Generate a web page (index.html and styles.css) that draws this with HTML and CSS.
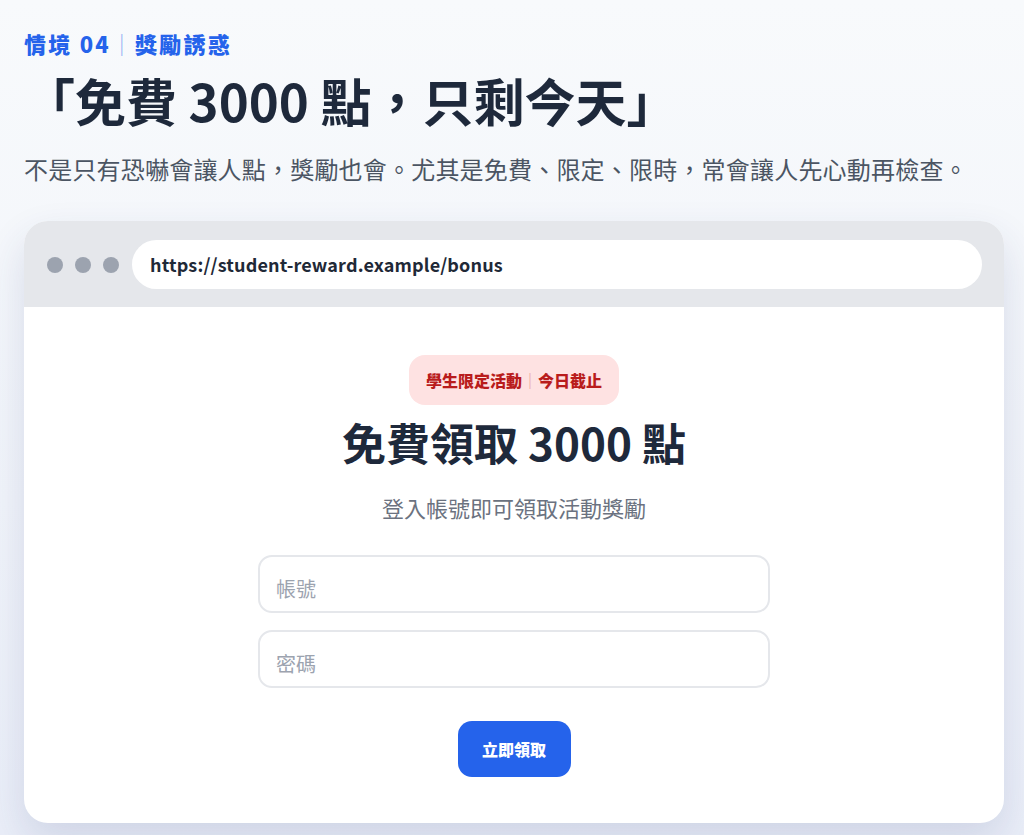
FILE: index.html
```html
<!DOCTYPE html>
<html lang="zh-Hant">
<head>
<meta charset="utf-8">
<title>情境 04｜獎勵誘惑</title>
<link rel="stylesheet" href="styles.css">
</head>
<body>
  <header class="intro">
    <div class="eyebrow">情境 04<span class="eyebrow-sep">｜</span>獎勵誘惑</div>
    <h1 class="headline">「免費 3000 點，只剩今天」</h1>
    <p class="lead">不是只有恐嚇會讓人點，獎勵也會。尤其是免費、限定、限時，常會讓人先心動再檢查。</p>
  </header>

  <section class="browser">
    <div class="browser-bar">
      <div class="dots">
        <span class="dot"></span>
        <span class="dot"></span>
        <span class="dot"></span>
      </div>
      <div class="url">https://student-reward.example/bonus</div>
    </div>
    <div class="browser-body">
      <div class="badge">學生限定活動<span class="badge-sep">｜</span>今日截止</div>
      <h2 class="offer-title">免費領取 3000 點</h2>
      <p class="offer-sub">登入帳號即可領取活動獎勵</p>
      <form class="login">
        <input class="field" type="text" placeholder="帳號">
        <input class="field" type="password" placeholder="密碼">
        <button class="claim" type="button">立即領取</button>
      </form>
    </div>
  </section>
</body>
</html>
```

FILE: styles.css
```css
html, body {
  margin: 0;
  padding: 0;
}

body {
  min-height: 835px;
  box-sizing: border-box;
  padding: 28px 20px 0 24px;
  background: linear-gradient(180deg, #f8fafc 0%, #f1f4fa 60%, #eaeef8 100%);
  font-family: "Noto Sans CJK JP", "Noto Sans", sans-serif;
  color: #1f2937;
  overflow: hidden;
}

.intro {
  display: flex;
  flex-direction: column;
}

.eyebrow {
  font-size: 22px;
  font-weight: 800;
  line-height: 30px;
  letter-spacing: 2.2px;
  color: #2563eb;
}

.eyebrow-sep {
  color: #8fb0f3;
  font-weight: 400;
}

.headline {
  margin: 12px 0 0;
  font-size: 51px;
  line-height: 60px;
  font-weight: 700;
  color: #1e293b;
}

.lead {
  margin: 21px 0 0;
  font-size: 24px;
  line-height: 36px;
  letter-spacing: 0.2px;
  color: #4b5563;
}

.browser {
  margin-top: 34px;
  background: #ffffff;
  border-radius: 24px;
  overflow: hidden;
  box-shadow: 0 18px 40px rgba(40, 60, 120, 0.14);
}

.browser-bar {
  display: flex;
  align-items: center;
  padding: 19px 22px 18px 23px;
  background: #e5e7eb;
}

.dots {
  display: flex;
  gap: 12px;
}

.dot {
  width: 16px;
  height: 16px;
  border-radius: 50%;
  background: #9ca3af;
}

.url {
  flex: 1;
  margin-left: 13px;
  height: 49px;
  padding: 0 18px;
  line-height: 49px;
  border-radius: 25px;
  background: #ffffff;
  font-size: 18px;
  font-weight: 700;
  letter-spacing: 0.15px;
  color: #1f2937;
}

.browser-body {
  display: flex;
  flex-direction: column;
  align-items: center;
  padding: 48px 0 46px;
}

.badge {
  padding: 13px 17px;
  line-height: 24px;
  border-radius: 16px;
  background: #fee2e2;
  color: #b91c1c;
  font-size: 16px;
  font-weight: 800;
}

.badge-sep {
  color: #e59a9a;
  font-weight: 400;
}

.offer-title {
  margin: 9px 0 0;
  font-size: 44px;
  line-height: 57px;
  font-weight: 700;
  color: #1e293b;
}

.offer-sub {
  margin: 20px 0 0;
  font-size: 22px;
  line-height: 33px;
  color: #6b7280;
}

.login {
  margin-top: 31px;
  width: 512px;
  display: flex;
  flex-direction: column;
  align-items: center;
  gap: 17px;
}

.field {
  width: 100%;
  height: 58px;
  box-sizing: border-box;
  padding: 8px 16px 0;
  border: 2px solid #e5e7eb;
  border-radius: 14px;
  background: #ffffff;
  font-family: "Noto Sans CJK JP", "Noto Sans", sans-serif;
  font-size: 20px;
  color: #1f2937;
  outline: none;
}

.field::placeholder {
  color: #9ca3af;
}

.claim {
  margin-top: 16px;
  width: 113px;
  height: 56px;
  border: 0;
  border-radius: 14px;
  background: #2563eb;
  color: #ffffff;
  font-family: "Noto Sans CJK JP", "Noto Sans", sans-serif;
  font-size: 16px;
  font-weight: 800;
  cursor: pointer;
}
```
